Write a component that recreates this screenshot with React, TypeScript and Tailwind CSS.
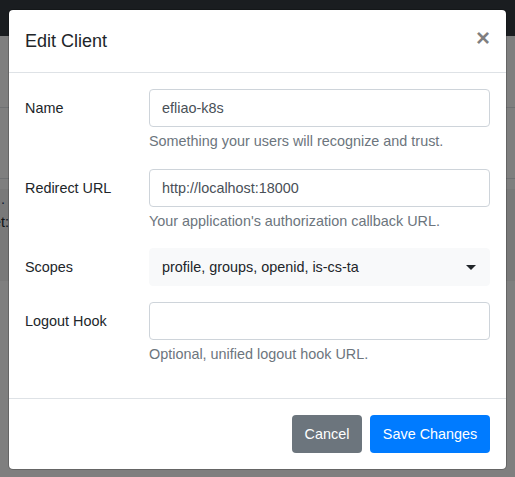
import React from "react";

function Field({
  label,
  value,
  help,
}: {
  label: string;
  value: string;
  help?: string;
}) {
  return (
    <div className="flex mb-4">
      <label className="w-[124px] shrink-0 pt-[8px] pb-[8px] text-[14.4px] leading-[22px] text-[#212529]">
        {label}
      </label>
      <div className="w-[342px]">
        <div className="h-[38px] border border-[#ced4da] rounded-[4px] px-3 flex items-center text-[14.4px] leading-[22px] text-[#495057] bg-white">
          {value}
        </div>
        {help && (
          <div className="mt-1 text-[14.4px] leading-[21.6px] text-[#6c757d]">{help}</div>
        )}
      </div>
    </div>
  );
}

export default function App() {
  return (
    <div className="relative w-[515px] h-[477px] overflow-hidden bg-white font-['Liberation_Sans',Arial,sans-serif]">
      {/* background page */}
      <div className="h-[36px] bg-[#343a40]" />
      <div className="h-[71px]" />
      <div className="h-px bg-[#dee2e6]" />
      <div className="h-[70px]" />
      <div className="h-px bg-[#dee2e6]" />
      <div className="h-[10px]" />
      <div className="h-[92px] bg-[#f2f2f2] flex flex-col">
        <div className="w-[5px] overflow-hidden flex justify-end whitespace-nowrap text-[14.4px] leading-[24px] text-[#1b3a6b] mt-[-2px]">
          <span>Redirect .</span>
        </div>
        <div className="w-[9px] overflow-hidden flex justify-end whitespace-nowrap text-[14.4px] leading-[24px] text-[#212529] mt-[-1px]">
          <span>Secret:</span>
        </div>
      </div>

      {/* backdrop */}
      <div className="absolute inset-0 bg-black/50" />

      {/* modal */}
      <div className="absolute left-[8px] top-[9px] w-[499px] bg-white border border-black/20 rounded-[5px] bg-clip-padding">
        <div className="flex items-start justify-between p-4 border-b border-[#dee2e6]">
          <h5 className="m-0 text-[18px] leading-[30px] font-normal text-[#212529]">Edit Client</h5>
          <button className="p-4 -m-4 ml-auto text-[24px] leading-[24px] font-bold text-black/50">
            ×
          </button>
        </div>
        <div className="p-4">
          <Field
            label="Name"
            value="efliao-k8s"
            help="Something your users will recognize and trust."
          />
          <Field
            label="Redirect URL"
            value="http://localhost:18000"
            help="Your application's authorization callback URL."
          />
          <div className="flex mb-4">
            <label className="w-[124px] shrink-0 pt-[8px] pb-[8px] text-[14.4px] leading-[22px] text-[#212529]">
              Scopes
            </label>
            <div className="w-[342px] h-[38px] bg-[#f8f9fa] border border-[#f8f9fa] rounded-[4px] pl-3 pr-[13px] flex items-center justify-between text-[14.4px] leading-[22px] text-[#212529]">
              <span>profile, groups, openid, is-cs-ta</span>
              <span className="w-0 h-0 border-t-[5px] border-t-[#212529] border-x-[5px] border-x-transparent" />
            </div>
          </div>
          <Field label="Logout Hook" value="" help="Optional, unified logout hook URL." />
        </div>
        <div className="flex justify-end gap-2 p-4 border-t border-[#dee2e6]">
          <button className="h-[38px] px-[12.75px] rounded-[4px] bg-[#6c757d] text-white text-[14.4px] leading-[22px]">
            Cancel
          </button>
          <button className="h-[38px] px-[12.75px] rounded-[4px] bg-[#007bff] text-white text-[14.4px] leading-[22px]">
            Save Changes
          </button>
        </div>
      </div>
    </div>
  );
}
